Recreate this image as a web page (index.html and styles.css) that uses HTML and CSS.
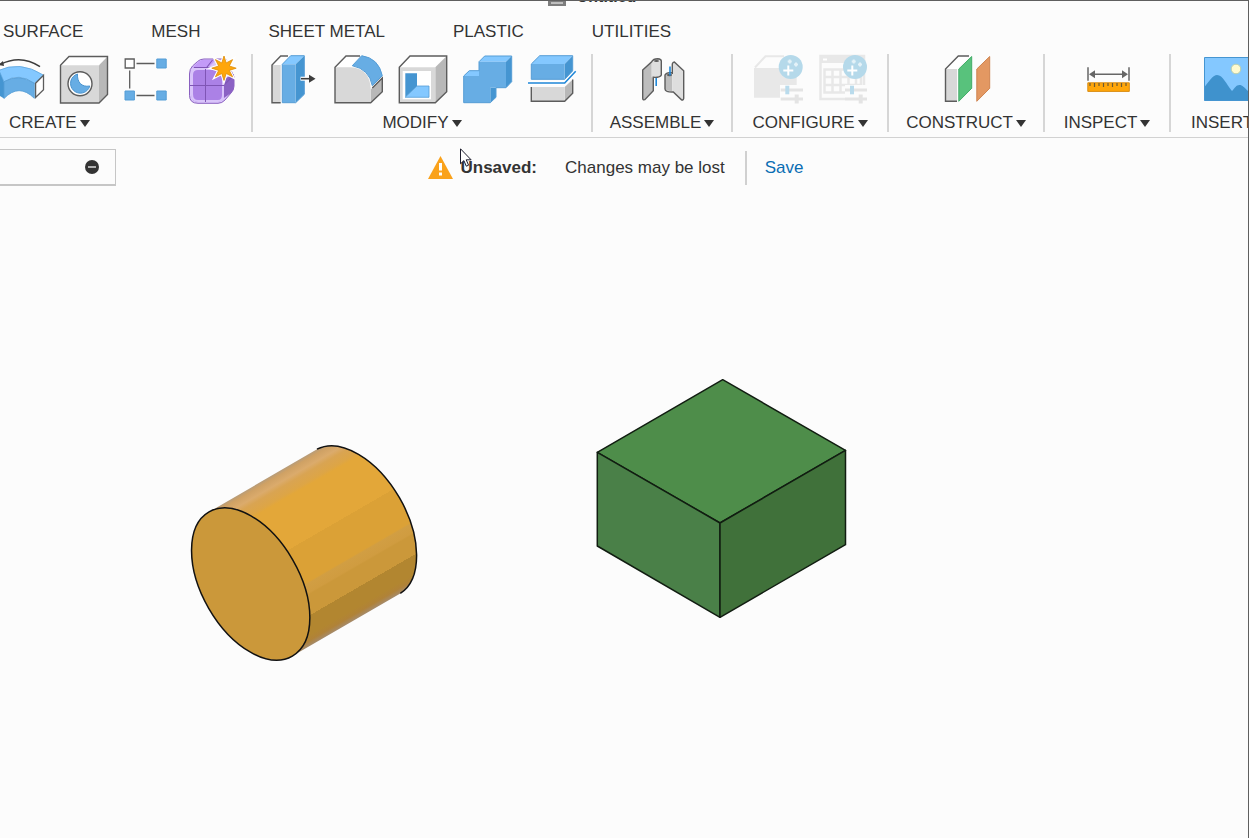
FILE: index.html
```html
<!DOCTYPE html>
<html lang="en">
<head>
    <meta charset="UTF-8">
    <meta name="viewport" content="width=device-width, initial-scale=1.0">
    <title>Untitled</title>
    <link rel="stylesheet" href="styles.css">
</head>
<body>
    <div class="app">
        <header class="titlebar">
            <svg class="doc-icon" width="18" height="18" viewBox="0 0 18 18">
                <path d="M0 0h18v18H0z" fill="#7d7d7d"/>
                <path d="M3 5h12M3 10h12M3 15h12" stroke="#fff" stroke-width="1"/>
            </svg>
            <span class="doc-title">Untitled</span>
        </header>

        <nav class="tabs">
            <a href="#">SURFACE</a>
            <a href="#">MESH</a>
            <a href="#">SHEET METAL</a>
            <a href="#">PLASTIC</a>
            <a href="#">UTILITIES</a>
        </nav>

        <div class="ribbon">
            <section class="group group-create">
                <div class="tools">
                    <button class="tool" aria-label="Bend">
                        <svg viewBox="0 0 48 48">
                            <path d="M0 17L6 14l4 11.700v16.800L0 36z" fill="#4595d1"/>
                            <path d="M3 15Q26 4 49.300 19L40.300 27.300Q25 16 10 25.700L5 14.500z" fill="#84c8ff" stroke="#5ea5dc" stroke-width=".8"/>
                            <path d="M10 25.700Q25 17 40.300 27.300v15Q25 27 10 42.500z" fill="#67ade4" stroke="#559dd6" stroke-width=".8"/>
                            <path d="M41.600 27.300l7.900-8v14.500l-7.900 7.700z" fill="#fff" stroke="#5c5c5c" stroke-width="1.300"/>
                            <path d="M6 8.500Q27-2 46 10.700" fill="none" stroke="#3d3d3d" stroke-width="1.500"/>
                            <path d="M4 9l5-4 1 5z" fill="#3d3d3d"/>
                        </svg>
                    </button>
                    <button class="tool" aria-label="Hole">
                        <svg viewBox="0 0 48 48">
                            <path d="M2.500 9.300L11 .500h38.500L41 9.300z" fill="#fff"/>
                            <path d="M41 9.300L49.500.500v38L41 47z" fill="#b8b8b8"/>
                            <path d="M2.500 9.300H41V47H2.500z" fill="#d8d8d8"/>
                            <path d="M2.500 9.300L11 .500h38.500v38L41 47H2.500z" fill="none" stroke="#5c5c5c" stroke-width="1.400"/>
                            <circle cx="22" cy="27.700" r="12" fill="#fff" stroke="#5c5c5c" stroke-width="1.400"/>
                            <path d="M19.500 18c-.5 8 4 13.500 12.300 12A9.800 9.800 0 1 1 19.500 18z" fill="#67ade4" stroke="#4a94cf"/>
                        </svg>
                    </button>
                    <button class="tool" aria-label="Pattern">
                        <svg viewBox="0 0 48 48">
                            <path d="M14.500 7.500h18M7.700 14.500v18M14.500 39.500h18" stroke="#5c5c5c" stroke-width="1.300"/>
                            <path d="M3.200 3h9v9h-9z" fill="#fff" stroke="#5c5c5c" stroke-width="1.300"/>
                            <path d="M34.800 3h9.400v9h-9.400zM3 35h9.400v9H3zM34.800 35h9.400v9h-9.400z" fill="#67ade4" stroke="#559dd6"/>
                        </svg>
                    </button>
                    <button class="tool" aria-label="Create Form">
                        <svg viewBox="0 0 48 48">
                            <path d="M3.500 18q0-5 3-8l5-4.500Q14 3 18 3h22l8 18v9q0 4-3 7l-6 7q-3 3.300-7 3.300H12q-8.500 0-8.500-8z" fill="#d9c4fa" stroke="#8a60c0"/>
                            <path d="M7 11l5-5q2.500-2.300 6-2.300h12L22 12H8q-2 0-1-1z" fill="#c39bf8"/>
                            <path d="M38 23l10-5v12q0 4-3 7l-7 5z" fill="#8b62c4"/>
                            <rect x="5.500" y="13" width="32" height="33" rx="6" fill="#ab81e6"/>
                            <path d="M19.500 13l7-9M38 29L47 20M8 11.500h24" fill="none" stroke="#7f55b5" stroke-width="1.100"/>
                            <path d="M6 38V19q0-6 6-6h19q6 0 6 6v20q0 6-5 6H12q-6 0-6-7z" fill="none" stroke="#d9c4fa" stroke-width="2"/>
                            <path d="M19.500 46V13M4 29.500h34" fill="none" stroke="#7f55b5"/>
                            <path d="M38 0l2.200 6.900 6.400-3.300-3.300 6.400 6.900 2.200-6.900 2.200 3.300 6.400-6.400-3.300L38 24.400l-2.200-6.900-6.400 3.300 3.300-6.400-6.900-2.200 6.900-2.200-3.300-6.400 6.400 3.300z" fill="#fff" stroke="#fff" stroke-width="3"/>
                            <path d="M38 0l2.200 6.900 6.400-3.300-3.300 6.400 6.900 2.200-6.900 2.200 3.300 6.400-6.400-3.300L38 24.400l-2.200-6.900-6.400 3.300 3.300-6.400-6.900-2.200 6.900-2.200-3.300-6.400 6.400 3.300z" fill="#ffa60a" stroke="#dd8c08" stroke-width=".8"/>
                        </svg>
                    </button>
                </div>
                <button class="group-label">CREATE</button>
            </section>

            <section class="group">
                <div class="tools">
                    <button class="tool" aria-label="Press Pull">
                        <svg viewBox="0 0 48 48">
                            <path d="M2 9L10.700 0H18l-7.300 9z" fill="#fff"/>
                            <path d="M2 9h8.700v37.700H2z" fill="#d8d8d8"/>
                            <path d="M10.700 46.700H2V9l8.700-9H18" fill="none" stroke="#5c5c5c" stroke-width="1.400"/>
                            <path d="M12.300 8.300L20.700-.300h13.600l-8.600 8.600z" fill="#84c8ff"/>
                            <path d="M25.700 8.300l8.600-8.600v38.600l-8.600 8.400z" fill="#4595d1"/>
                            <path d="M12.300 8.300h13.400v38.400H12.300z" fill="#67ade4"/>
                            <path d="M12.300 8.300L20.700-.300h13.600v38.600l-8.600 8.400H12.300z" fill="none" stroke="#559dd6"/>
                            <path d="M30.500 22.700H40" stroke="#fff" stroke-width="4"/>
                            <path d="M31 22.700h10" stroke="#3d3d3d" stroke-width="1.600"/>
                            <path d="M39 18.700l6.500 4-6.500 4z" fill="#3d3d3d"/>
                        </svg>
                    </button>
                    <button class="tool" aria-label="Fillet">
                        <svg viewBox="0 0 48 48">
                            <path d="M1 11.300L12 0h14L17 11.300z" fill="#fff"/>
                            <path d="M36.700 33.500L48.300 22v13.700l-11.600 11z" fill="#b8b8b8"/>
                            <path d="M1 11.300h15.500q19 1 20.200 21v14.400H1z" fill="#d8d8d8"/>
                            <path d="M26 0H12L1 11.300v35.400h35.700l11.600-11V22l-10 10" fill="none" stroke="#5c5c5c" stroke-width="1.400"/>
                            <path d="M18.300 9.700l9.400-10q17 2.500 20.600 20l-10 10q-3-16.500-20-20z" fill="#67ade4" stroke="#559dd6"/>
                        </svg>
                    </button>
                    <button class="tool" aria-label="Shell">
                        <svg viewBox="0 0 48 48">
                            <path d="M1.300 11.300L12 0h36.700L37.300 11.300z" fill="#fff"/>
                            <path d="M37.300 11.300L48.700 0v35.700l-11.400 11z" fill="#b8b8b8"/>
                            <path d="M1.300 11.300h36v35.400h-36z" fill="#d8d8d8"/>
                            <path d="M1.300 11.300L12 0h36.700v35.700l-11.400 11h-36z" fill="none" stroke="#5c5c5c" stroke-width="1.400"/>
                            <path d="M4.700 15H33v28.300H4.700z" fill="#fff"/>
                            <path d="M7.300 17.300H19V30L7.300 41.300z" fill="#4595d1"/>
                            <path d="M19 30h12v11.300H7.300z" fill="#84c8ff" stroke="#559dd6" stroke-width=".8"/>
                        </svg>
                    </button>
                    <button class="tool" aria-label="Combine">
                        <svg viewBox="0 0 48 48">
                            <path d="M17 5.700L22.700 0h27L44 5.700zM1.700 20l5.600-5.300H17V20z" fill="#84c8ff"/>
                            <path d="M44 5.700L49.700 0v25.700l-5.700 6zM28.300 31.700H34v9.600l-5.700 5.400z" fill="#4595d1"/>
                            <path d="M17 5.700h27v26H28.300v15H1.700V20H17z" fill="#67ade4"/>
                            <path d="M1.700 20l5.600-5.300H17v-9L22.700 0h27v25.700l-5.700 6H34v9.600l-5.700 5.400H1.700z" fill="none" stroke="#559dd6"/>
                        </svg>
                    </button>
                    <button class="tool" aria-label="Split Body">
                        <svg viewBox="0 0 48 48">
                            <path d="M5.300 8l8.400-8.300h33l-8 8.300z" fill="#84c8ff"/>
                            <path d="M38.700 8l8-8.300V15l-8 8.300z" fill="#4595d1"/>
                            <path d="M5.300 8h33.400v15.300H5.300z" fill="#67ade4"/>
                            <path d="M5.300 8l8.400-8.300h33V15l-8 8.300H5.300z" fill="none" stroke="#559dd6"/>
                            <path d="M38.700 31l8-7.500v13.800l-8 8z" fill="#b8b8b8"/>
                            <path d="M5.300 31h33.400v14.300H5.300z" fill="#d8d8d8"/>
                            <path d="M5.300 31v14.300h33.400l8-8V23.500" fill="none" stroke="#5c5c5c" stroke-width="1.400"/>
                            <path d="M2 27h36.700l11-11.700" fill="none" stroke="#fff" stroke-width="4"/>
                            <path d="M2 27h36.700l11-11.700" fill="none" stroke="#1f87d8" stroke-width="1.600"/>
                        </svg>
                    </button>
                </div>
                <button class="group-label">MODIFY</button>
            </section>

            <section class="group">
                <div class="tools">
                    <button class="tool" aria-label="Joint">
                        <svg viewBox="0 0 48 48">
                            <path d="M18.200 20v10" stroke="#1f87d8" stroke-width="1.600"/>
                            <path d="M4.700 14l9-8.300v15.600h1.600v13.400l-8.500 9q-2.100.600-2.100-1.400z" fill="#bdbdbd"/>
                            <path d="M13.700 5.700q4-5.500 9.600-1V19q-1 2.700-8 2.300h-1.600z" fill="#dedede"/>
                            <path d="M4.700 14l9-8.300q1.600-3 6-3 3.600.300 3.600 2.300v14q-1 2.700-8 2.300v13.400l-8.500 9q-2.100.600-2.100-1.400z" fill="none" stroke="#5c5c5c" stroke-width="1.400"/>
                            <ellipse cx="18.500" cy="5" rx="2.500" ry="1" fill="#5c5c5c"/>
                            <path d="M34.300 18h-7.300v15q1 2 7.300 2z" fill="#bdbdbd"/>
                            <path d="M34.300 8q.5-2 2-2l9.400 8.700v27.600q-.5 2.300-2.200 1.500l-9.200-8.100z" fill="#dedede"/>
                            <path d="M34.300 18V8q.5-2 2-2l9.400 8.700v27.600q-.5 2.300-2.200 1.500l-8.200-7.800q-8.300.300-8.300-3V19q1-2.500 7-2.500" fill="none" stroke="#5c5c5c" stroke-width="1.400"/>
                            <ellipse cx="31.500" cy="19" rx="2.500" ry="1.200" fill="#5c5c5c"/>
                            <path d="M32 10.500v9" stroke="#1f87d8" stroke-width="1.600"/>
                        </svg>
                    </button>
                </div>
                <button class="group-label">ASSEMBLE</button>
            </section>

            <section class="group">
                <div class="tools">
                    <button class="tool" aria-label="Create Configuration" disabled>
                        <svg viewBox="0 0 48 48">
                            <path d="M0 12h42.700v29.700H0z" fill="#e8e8e8"/>
                            <path d="M1 11.500L11.500.200H30" fill="none" stroke="#e8e8e8" stroke-width="2"/>
                            <path d="M26 29h24v20H26z" fill="#fcfcfc"/>
                            <path d="M26.700 34H49M26.700 43H49" stroke="#e4e4e4" stroke-width="3"/>
                            <path d="M33.300 29.700v8.600" stroke="#b9dbec" stroke-width="4"/>
                            <path d="M42.700 38.500v9" stroke="#e4e4e4" stroke-width="4"/>
                            <circle cx="36.700" cy="11" r="12" fill="#b5d9ea"/>
                            <path d="M34.300 9.500v10M29.300 14.500h10" stroke="#fff" stroke-width="2"/>
                            <path d="M35.700 3.500v4M33.700 5.500h4M42 6.500v4M40 8.500h4" stroke="#e4f2f8" stroke-width="2"/>
                        </svg>
                    </button>
                    <button class="tool" aria-label="Configuration Table" disabled>
                        <svg viewBox="0 0 48 48">
                            <path d="M2.500 0H46v43H2.500z" fill="#fcfcfc" stroke="#e8e8e8" stroke-width="2.500"/>
                            <path d="M2 0h44v7H2z" fill="#e8e8e8"/>
                            <path d="M5 3.500h4" stroke="#fff" stroke-width="2"/>
                            <path d="M6.500 13.500H43v23H6.500zM6.500 21H43M6.500 29H43M14.500 13.500v23M22.500 13.500v23M30.500 13.500v23M38 13.500v23" fill="none" stroke="#e8e8e8" stroke-width="2.500"/>
                            <path d="M27 29h24v20H27z" fill="#fcfcfc"/>
                            <path d="M27 34h22M27 43h22" stroke="#e4e4e4" stroke-width="3"/>
                            <path d="M34 29.700v8.600" stroke="#b9dbec" stroke-width="4"/>
                            <path d="M42.700 38.500v9" stroke="#e4e4e4" stroke-width="4"/>
                            <circle cx="37" cy="11" r="12" fill="#b5d9ea"/>
                            <path d="M34.300 9.500v10M29.300 14.500h10" stroke="#fff" stroke-width="2"/>
                            <path d="M35.700 3.500v4M33.700 5.500h4M42 6.500v4M40 8.500h4" stroke="#e4f2f8" stroke-width="2"/>
                        </svg>
                    </button>
                </div>
                <button class="group-label">CONFIGURE</button>
            </section>

            <section class="group">
                <div class="tools">
                    <button class="tool" aria-label="Offset Plane">
                        <svg viewBox="0 0 48 48">
                            <path d="M3.500 13L16.300 0H27L15 13z" fill="#fff"/>
                            <path d="M3.500 13H15v32.300H3.500z" fill="#d8d8d8"/>
                            <path d="M15 45.300H3.500V13L16.300 0H27" fill="none" stroke="#5c5c5c" stroke-width="1.400"/>
                            <path d="M16.800 13L29.700.500v31.800l-12.900 13z" fill="#58c27c" stroke="#43ac68"/>
                            <path d="M34.800 13L47.700.500v31.800l-12.900 13z" fill="#e39862" stroke="#cf8450"/>
                        </svg>
                    </button>
                </div>
                <button class="group-label">CONSTRUCT</button>
            </section>

            <section class="group">
                <div class="tools">
                    <button class="tool" aria-label="Measure">
                        <svg viewBox="0 0 48 48">
                            <path d="M5 11.300v13.400M46 11.300v13.400M9 18.300h33" stroke="#666" stroke-width="1.500"/>
                            <path d="M6 18.300l6-4v8zM45 18.300l-6-4v8z" fill="#666"/>
                            <path d="M4.800 26.800h41.500v8.600H4.800z" fill="#ffa60a" stroke="#d98d14"/>
                            <path d="M7 27v3M11.500 27v4M16 27v3M20.500 27v4M25 27v3M29.500 27v4M34 27v3M38.500 27v4M43 27v3" stroke="#6b5a35" stroke-width="1.200"/>
                        </svg>
                    </button>
                </div>
                <button class="group-label">INSPECT</button>
            </section>

            <section class="group group-insert">
                <div class="tools">
                    <button class="tool" aria-label="Insert Canvas">
                        <svg viewBox="0 0 48 48">
                            <path d="M.500 1.500h49v43H.500z" fill="#84c8ff"/>
                            <path d="M.500 31C6 24 9 19 13 19c6 0 9 9 15 16 3-3 4-6 7.500-6 4 0 6 5 14 10v5.500H.500z" fill="#3f92cd"/>
                            <path d="M.500 1.500h49v43H.500z" fill="none" stroke="#4595d1"/>
                            <circle cx="32" cy="13" r="4.800" fill="#fffbd0" stroke="#b9cfae"/>
                        </svg>
                    </button>
                </div>
                <button class="group-label">INSERT</button>
            </section>
        </div>

        <div class="status-row">
            <div class="browser-panel">
                <button class="collapse" aria-label="Collapse browser">
                    <svg width="14" height="14" viewBox="0 0 14 14">
                        <circle cx="7" cy="7" r="7" fill="#333"/>
                        <path d="M3 7h8" stroke="#ddd" stroke-width="1.500"/>
                    </svg>
                </button>
            </div>
            <div class="alert">
                <svg class="alert-icon" width="25" height="23" viewBox="0 0 25 23">
                    <path d="M12.500 0L25 23H0z" fill="#faa21b"/>
                    <path d="M12.500 7v7.500M12.500 16.500v3" stroke="#fff" stroke-width="3"/>
                </svg>
                <strong>Unsaved:</strong>
                <span class="alert-text">Changes may be lost</span>
                <a href="#" class="save">Save</a>
                <svg class="cursor" width="12" height="20" viewBox="0 0 12 20">
                    <path d="M.5.800v15l3.400-3.200 2.400 5.600 2.300-1-2.400-5.400h4.900z" fill="#fff" stroke="#1c1c2c"/>
                </svg>
            </div>
        </div>

        <main class="viewport">
            <svg class="scene">
                <defs>
                    <linearGradient id="bodyShade" gradientUnits="userSpaceOnUse" x1="29" y1="82" x2="112.400" y2="226.100">
                        <stop offset="0" stop-color="#b89c78"/>
                        <stop offset=".02" stop-color="#cfa164"/>
                        <stop offset=".06" stop-color="#dbab6c"/>
                        <stop offset=".09" stop-color="#d9a452"/>
                        <stop offset=".14" stop-color="#dda546"/>
                        <stop offset=".16" stop-color="#e3a739"/>
                        <stop offset=".436" stop-color="#e3a739"/>
                        <stop offset=".436" stop-color="#dba136"/>
                        <stop offset=".66" stop-color="#dba136"/>
                        <stop offset=".67" stop-color="#d19e43"/>
                        <stop offset=".72" stop-color="#d09c40"/>
                        <stop offset=".73" stop-color="#cb983a"/>
                        <stop offset=".84" stop-color="#cb983a"/>
                        <stop offset=".84" stop-color="#b28630"/>
                        <stop offset=".94" stop-color="#b28630"/>
                        <stop offset=".97" stop-color="#b08238"/>
                        <stop offset="1" stop-color="#a58b6c"/>
                    </linearGradient>
                </defs>
                <g class="cylinder" transform="translate(180 233)">
                    <path d="M29 82L137 19.200A83.300 48.500 60 0 1 220.300 163.400L112.400 226.100z" fill="url(#bodyShade)"/>
                    <path d="M137 19.200A83.300 48.500 60 0 1 220.300 163.400" fill="none" stroke="#111" stroke-width="1.500"/>
                    <ellipse cx="70.700" cy="154" rx="83.300" ry="48.500" transform="rotate(60 70.700 154)" fill="#cb983a" stroke="#111" stroke-width="1.500"/>
                </g>
                <g class="box" transform="translate(585 173)" stroke="#111d11" stroke-width="1.500" stroke-linejoin="round">
                    <path d="M137.700 9.700L260.500 80.300 135 153 12.300 82.300z" fill="#4e8d4a"/>
                    <path d="M12.300 82.300L135 153v94.300L12.300 176z" fill="#4a8048"/>
                    <path d="M260.500 80.300v94.400L135 247.300V153z" fill="#40713a"/>
                </g>
            </svg>
        </main>
    </div>
</body>
</html>
```

FILE: styles.css
```css
* {
    box-sizing: border-box;
}

body {
    margin: 0;
    background: #fcfcfc;
    color: #333;
    font-family: "Liberation Sans", Arial, sans-serif;
    font-size: 17px;
    line-height: 20px;
}

a {
    color: inherit;
    text-decoration: none;
}

button {
    padding: 0;
    border: none;
    background: none;
    color: inherit;
    font: inherit;
    cursor: pointer;
}

.app {
    display: flex;
    flex-direction: column;
    min-height: 100vh;
    border-top: 1px solid #5f5f5f;
    border-right: 1px solid #5f5f5f;
    overflow: hidden;
}

/* bottom edge of the document title */
.titlebar {
    display: flex;
    justify-content: center;
    align-items: flex-end;
    gap: 11px;
    height: 5px;
    padding-right: 64px;
    overflow: hidden;
}

.doc-title {
    font-size: 16px;
    font-weight: bold;
    line-height: 18px;
}

.tabs {
    display: flex;
    gap: 68px;
    padding: 16px 3px 12px;
    white-space: nowrap;
}

.ribbon {
    display: grid;
    grid-template-columns: 253px 340px 140px 156px 156px 126px 1fr;
    padding-bottom: 5px;
    border-bottom: 1px solid #d2d2d2;
}

.group {
    display: flex;
    flex-direction: column;
    align-items: center;
    gap: 8px;
    min-width: 0;
    padding-top: 2px;
    border-right: 2px solid #d6d6d6;
}

.tools {
    display: flex;
    gap: 16px;
}

.tool {
    flex: none;
    width: 48px;
    height: 48px;
}

.tool svg {
    display: block;
    width: 48px;
    height: 48px;
    overflow: visible;
}

.group-label {
    display: flex;
    align-items: center;
    gap: 3px;
    padding-top: 2px;
    line-height: 18px;
    white-space: nowrap;
}

.group-label::after {
    content: "";
    border: 5px solid transparent;
    border-top: 7px solid #333;
    border-bottom: none;
}

.group-create .tools {
    align-self: stretch;
    justify-content: flex-end;
    padding-right: 17px;
}

.group-create .group-label {
    align-self: flex-start;
    padding-left: 9px;
}

.group-insert {
    align-items: flex-start;
    padding-left: 20px;
    border-right: none;
}

.group-insert .tools {
    padding-left: 13px;
}

.status-row {
    display: grid;
    grid-template-columns: 1fr auto 1fr;
    align-items: center;
    padding: 11px 0;
}

.browser-panel {
    display: flex;
    align-items: center;
    justify-content: flex-end;
    width: 116px;
    height: 37px;
    padding-right: 16px;
    border: 1px solid #c6c6c6;
    border-left: none;
    border-bottom-width: 2px;
}

.collapse {
    display: flex;
}

.alert {
    position: relative;
    display: flex;
    align-items: center;
    gap: 8px;
    padding-right: 17px;
    white-space: nowrap;
}

.alert-text {
    padding: 0 12px 0 20px;
}

.save {
    padding: 7px 0 7px 18px;
    border-left: 2px solid #d0d0d0;
    color: #0a6db3;
}

.cursor {
    position: absolute;
    top: -3px;
    left: 32px;
}

.viewport {
    display: flex;
    flex: 1;
}

.scene {
    flex: 1;
    min-height: 480px;
}
```
